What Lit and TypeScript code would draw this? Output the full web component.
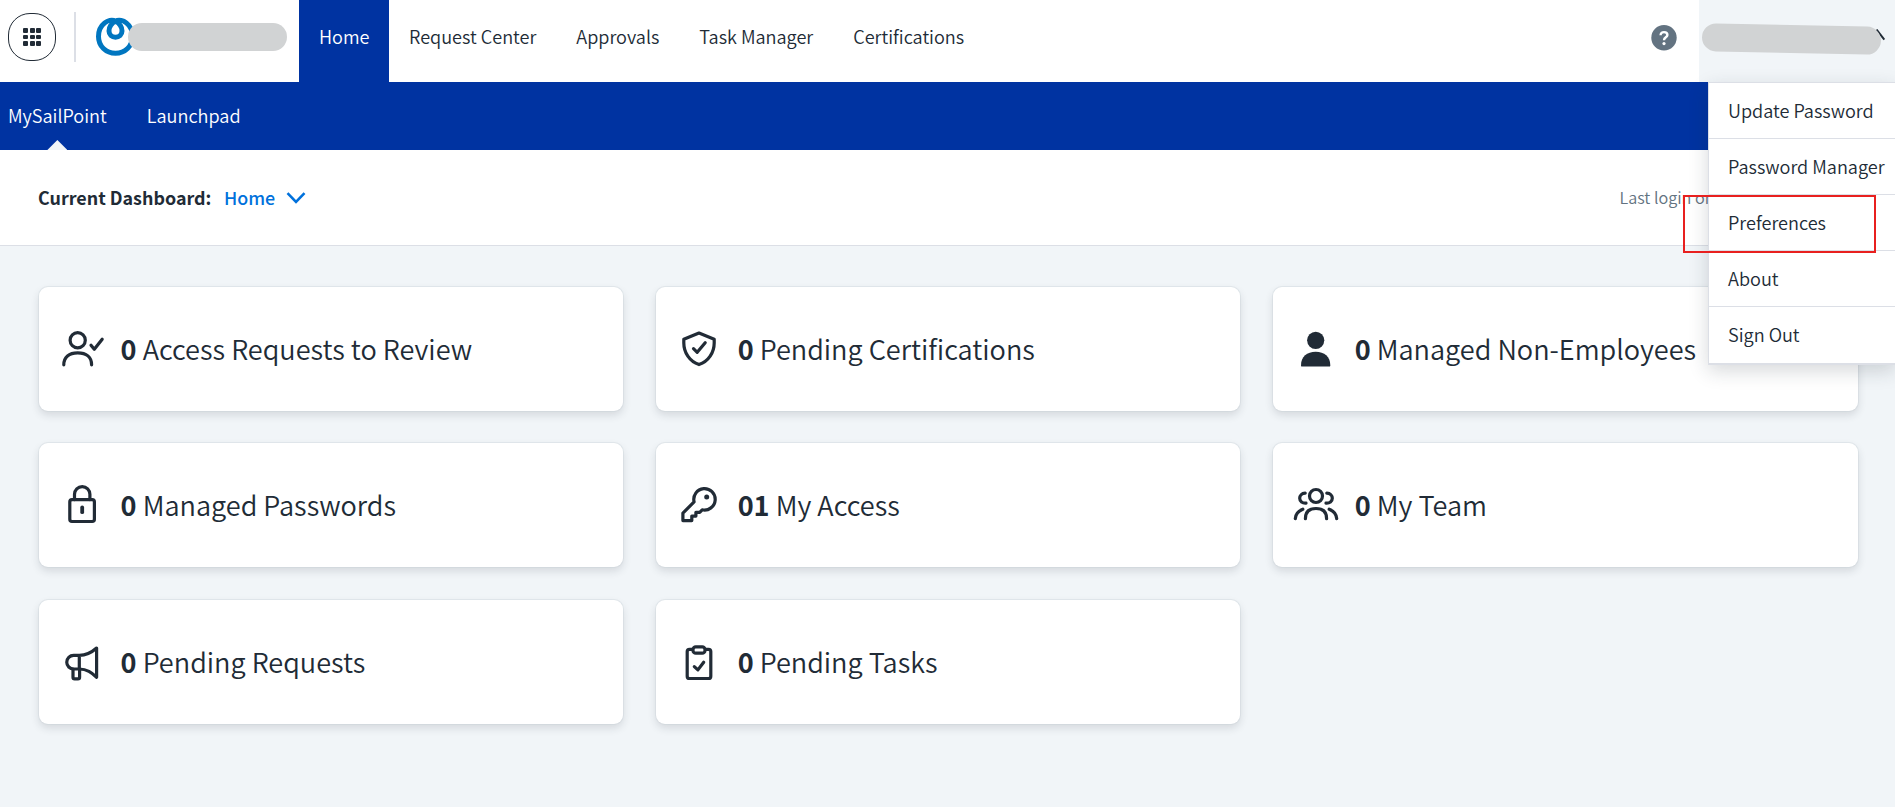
import { LitElement, html, svg, css } from "lit";
import { customElement } from "lit/decorators.js";

const icons: Record<string, unknown> = {
  review: svg`<circle cx="19.7" cy="15.3" r="7.6"/><path d="M5.8 39.8C5.8 32.2 11 27.9 19.7 27.9S33.6 32.2 33.6 39.8"/><path d="M33 20.2L36.3 24.3L44.2 14.2"/>`,
  shield: svg`<path d="M24 8L39.2 14.2V18C39.2 27.5 33.5 36.5 24 39.6C14.5 36.5 8.8 27.5 8.8 18V14.2Z"/><path d="M18.5 23.7L22.2 27.3L30.2 17.8"/>`,
  person: svg`<g fill="currentColor" stroke="none"><circle cx="23.7" cy="15.3" r="8.6"/><path d="M9 40.4C9 31.6 15 26.7 23.7 26.7S38.3 31.6 38.3 40.4Q38.3 41.6 37.1 41.6H10.2Q9 41.6 9 40.4Z"/></g>`,
  lock: svg`<rect x="11.8" y="18.6" width="24.6" height="21.9" rx="2.2"/><path d="M16.5 18.6V13.3A7.7 7.7 0 0 1 31.9 13.3V18.6"/><path d="M24.2 26.4V31.2" stroke-width="3.8"/>`,
  key: svg`<path d="M19.1 20.9A10.7 10.7 0 1 1 27.2 28.8L24.7 31.3H20.9V35.1H16.8V39.6H7.9V32.1Z"/><circle cx="31.7" cy="15.9" r="2.5" fill="currentColor" stroke="none"/>`,
  team: svg`<circle cx="24" cy="15" r="6.5"/><path d="M13.4 37.7C13.4 31 17.4 27.5 24 27.5S34.6 31 34.6 37.7"/><path d="M13.2 12.2C9.6 12.4 7.7 14.7 7.7 17.3C7.7 20.4 10.4 22.4 14 22.1M34.8 12.2C38.4 12.4 40.3 14.7 40.3 17.3C40.3 20.4 37.6 22.4 34 22.1M10.8 28.2C6.3 30 3.5 33.6 3.3 37.7M37.2 28.2C41.7 30 44.5 33.6 44.7 37.7"/>`,
  megaphone: svg`<path d="M38.6 10C33.5 14.6 29 17.3 21.3 17.3H15.6A6.85 6.85 0 0 0 15.6 31H21.3C29 31 33.5 34.6 38.6 39.2ZM21.3 17.3V31"/><path d="M15 31V39.2Q15 40.8 16.6 40.8H20Q21.6 40.8 21.6 39.2V31"/>`,
  clipboard: svg`<path d="M17.6 11.3H14.5Q12.2 11.3 12.2 13.6V38.2Q12.2 40.5 14.5 40.5H33.5Q35.8 40.5 35.8 38.2V13.6Q35.8 11.3 33.5 11.3H30.4"/><rect x="18" y="8.8" width="12" height="6.4" rx="2.8"/><path d="M19.3 28.6L22.9 31.9L28.7 24.2"/>`,
};

const cards = [
  { icon: "review", count: "0", label: "Access Requests to Review" },
  { icon: "shield", count: "0", label: "Pending Certifications" },
  { icon: "person", count: "0", label: "Managed Non-Employees" },
  { icon: "lock", count: "0", label: "Managed Passwords" },
  { icon: "key", count: "01", label: "My Access" },
  { icon: "team", count: "0", label: "My Team" },
  { icon: "megaphone", count: "0", label: "Pending Requests" },
  { icon: "clipboard", count: "0", label: "Pending Tasks" },
];

@customElement("app-root")
export class AppRoot extends LitElement {
  static styles = css`
    :host {
      display: flex;
      flex-direction: column;
      position: relative;
      width: 100%;
      height: 807px;
      overflow: hidden;
      background: #f1f5f8;
      color: #212b36;
      font: 350 18.1px/24px "Noto Sans CJK SC", "Noto Sans", sans-serif;
      white-space: nowrap;
    }
    * { box-sizing: border-box; }
    svg { display: block; }
    .top { display: flex; align-items: stretch; height: 82px; background: #fff; flex: none; }
    .brand { display: flex; align-items: flex-start; width: 299px; padding: 12px 0 0 8px; flex: none; }
    .apps {
      width: 48px; height: 48px; margin-top: 1px;
      border: 1px solid #212b36; border-radius: 22px;
      display: grid; place-content: center;
      grid-template-columns: repeat(3, 5px); gap: 1.5px;
    }
    .apps i { width: 5px; height: 4.8px; border-radius: 1px; background: #212b36; }
    .rule { width: 2px; height: 50px; margin-left: 18px; background: #dcdfe6; }
    .logo { margin: 5px 0 0 19px; }
    .pill { height: 28px; background: #d1d3d4; border-radius: 14px; }
    .name { width: 158.5px; margin: 11px 0 0 -8px; position: relative; }
    .tab { padding: 24px 20px 0; }
    .tab.on { background: #0033a1; color: #fff; width: 90px; }
    .help { margin: 25px 22px 0 auto; }
    .user { width: 196px; background: #f1f5f8; padding: 25px 0 0 3px; display: flex; flex: none; }
    .user .pill { width: 179px; height: 27.5px; transform: rotate(1.2deg); position: relative; }
    .user svg { margin: 4px 0 0 -5px; }
    .sub { display: flex; height: 68px; background: #0033a1; color: #fff; flex: none; padding-left: 8px; gap: 40px; }
    .link { padding-top: 21px; display: flex; flex-direction: column; align-items: center; justify-content: space-between; }
    .tri { width: 20px; height: 10px; background: #f1f5f8; clip-path: polygon(50% 0, 100% 100%, 0 100%); }
    .bar { display: flex; align-items: center; height: 96px; background: #fff; border-bottom: 1px solid #dcdfe6; padding: 0 39px 2px 38px; flex: none; }
    .bar b, .dash { font-size: 17.9px; }
    .bar b { font-weight: 700; }
    .dash { display: flex; align-items: center; color: #0071dc; font-weight: 500; margin-left: 12.5px; gap: 10.5px; }
    .dash svg { width: 20px; height: 12px; margin-top: 2px; }
    .last { margin-left: auto; width: 236.5px; font-size: 16.2px; color: #637381; }
    .grid {
      display: grid; grid-template-columns: repeat(3, 1fr); grid-auto-rows: 123.6px;
      gap: 32.9px 32.6px; padding: 41px 37.5px 0 39px;
    }
    .card {
      display: flex; align-items: center; gap: 15px; padding-left: 18.6px;
      background: #fff; border-radius: 9px; font-size: 27.1px; line-height: 36px;
      box-shadow: 0 0 0 1px rgba(200, 208, 215, .35), 0 4px 8px rgba(33, 43, 54, .14);
    }
    .card b { font-weight: 700; }
    .icon { width: 48px; height: 48px; fill: none; stroke: currentColor; stroke-width: 3.2; stroke-linecap: round; stroke-linejoin: round; flex: none; }
    .menu {
      position: absolute; left: 1708px; top: 82px; width: 187px; background: #fff;
      border: solid #dcdfe6; border-width: 1px 0 2px 1px;
      box-shadow: 0 6px 18px rgba(33, 43, 54, .18);
    }
    .item { height: 56px; padding: 15.4px 0 0 19px; border-bottom: 1px solid #dcdfe6; }
    .item:last-child { border-bottom: 0; }
    .mark { position: absolute; left: 1683px; top: 194.5px; width: 193px; height: 58px; border: 2.5px solid #e8201f; }
  `;

  render() {
    return html`
      <header class="top">
        <div class="brand">
          <div class="apps">${Array.from({ length: 9 }, () => html`<i></i>`)}</div>
          <div class="rule"></div>
          <svg class="logo" width="41" height="40" viewBox="0 0 41 40" fill="none" stroke="#0076c0" stroke-width="5">
            <path d="M20.5 4.2C17 2 12.5 3.6 9.7 5.9C5 9.6 3.5 14.3 3.5 19.5C3.5 29.2 11 36.3 20.5 36.3S37.5 29.2 37.5 19.5C37.5 14.3 36 9.6 31.3 5.9C28.5 3.6 24 2 20.5 4.2C16.8 6.3 14 10.2 14 14C14 17.5 16.8 20.2 20.5 20.2S27 17.5 27 14C27 10.2 24.2 6.3 20.5 4.2Z"/>
          </svg>
          <div class="pill name"></div>
        </div>
        <div class="tab on">Home</div>
        <div class="tab">Request Center</div>
        <div class="tab">Approvals</div>
        <div class="tab">Task Manager</div>
        <div class="tab">Certifications</div>
        <svg class="help" width="26" height="26" viewBox="0 0 26 26">
          <circle cx="13" cy="12.7" r="12.7" fill="#637381"/>
          <path d="M9.6 10.2C9.6 8.2 11 7.1 13 7.1S16.4 8.2 16.4 10C16.4 12.4 13 12.3 13 15.2" fill="none" stroke="#fff" stroke-width="2.4"/>
          <circle cx="13" cy="18.6" r="1.6" fill="#fff"/>
        </svg>
        <div class="user">
          <div class="pill"></div>
          <svg width="12" height="12" viewBox="0 0 12 12" stroke="#212b36" stroke-width="2"><path d="M.5 .5L8.3 10.6" fill="none"/></svg>
        </div>
      </header>
      <nav class="sub">
        <div class="link">MySailPoint<span class="tri"></span></div>
        <div class="link">Launchpad</div>
      </nav>
      <section class="bar">
        <b>Current Dashboard:</b>
        <div class="dash">Home
          <svg viewBox="0 0 20 12" fill="none" stroke="currentColor" stroke-width="2.6"><path d="M1.5 1.2L10 9.8L18.5 1.2"/></svg>
        </div>
        <div class="last">Last login on</div>
      </section>
      <main class="grid">
        ${cards.map((c) => html`
          <div class="card">
            <svg class="icon" viewBox="0 0 48 48">${icons[c.icon]}</svg>
            <span><b>${c.count}</b> ${c.label}</span>
          </div>`)}
      </main>
      <div class="menu">
        ${["Update Password", "Password Manager", "Preferences", "About", "Sign Out"].map((t) => html`<div class="item">${t}</div>`)}
      </div>
      <div class="mark"></div>
    `;
  }
}
